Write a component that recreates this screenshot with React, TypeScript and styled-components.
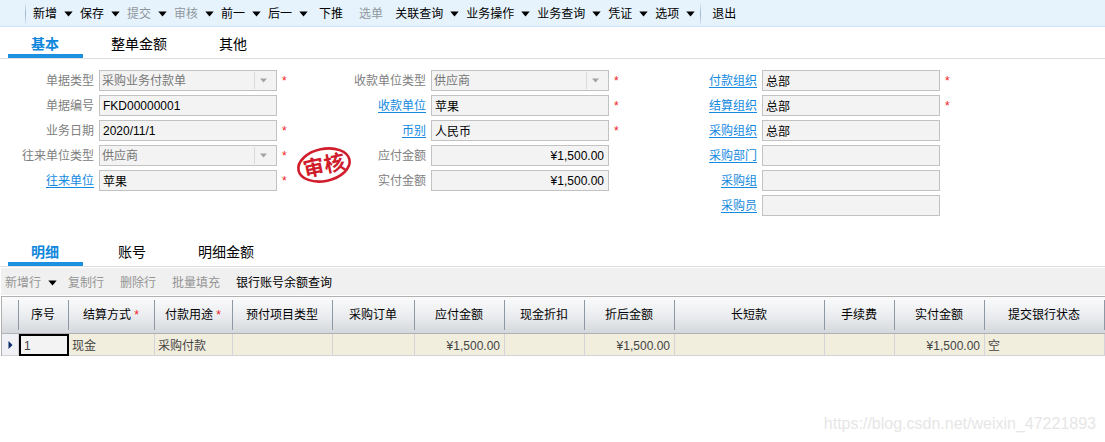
import React from 'react';
import styled, { createGlobalStyle, css } from 'styled-components';

const Global = createGlobalStyle`
  *, *::before, *::after { box-sizing: border-box; }
  body {
    margin: 0;
    background: #fff;
    color: #000;
    font: 12px/16px "Liberation Sans", "Noto Sans CJK SC", sans-serif;
  }
  button, input, select { font: inherit; margin: 0; }
`;

const Page = styled.main`
  position: relative;
  display: flex;
  flex-direction: column;
  min-height: 100vh;
`;

const MainBar = styled.div`
  display: flex;
  align-items: center;
  height: 27px;
  padding-top: 1px;
  padding-left: 25px;
  background: #e7f3fc;
  border-bottom: 1px solid #cce2fc;
`;

const SubBar = styled.div`
  display: flex;
  align-items: center;
  height: 27px;
  margin: 1px 0 1px 1px;
  padding: 1px 4px 0;
  background: #f0f0f0;
`;

const Divider = styled.span<{ $trailing?: boolean }>`
  width: 1px;
  height: 20px;
  margin: ${p => (p.$trailing ? '0 7px 0 -2px' : '0 7px 0 0')};
  background: linear-gradient(#d8e6f3, #9fb6cf, #d8e6f3);
`;

const ToolButton = styled.button<{ $menu?: boolean }>`
  display: flex;
  align-items: center;
  gap: 7px;
  padding: ${p => (p.$menu ? '1px 7px 0 0' : '1px 12px 0 4px')};
  border: 0;
  background: none;
  color: #000;
  line-height: 18px;
  white-space: nowrap;
  &:disabled { color: #8f979e; }
`;

const SubButton = styled(ToolButton)`
  &:disabled { color: #959595; }
`;

const Caret = () => (
  <svg width="9" height="6" viewBox="0 0 9 6" aria-hidden="true">
    <path d="M0.3 0.5H8.7L4.5 5.5Z" fill="#000" />
  </svg>
);

const TabStrip = styled.div<{ $spaced?: boolean }>`
  display: flex;
  align-items: stretch;
  gap: 5px;
  height: 32px;
  padding-left: 8px;
  border-bottom: 1px solid #dedede;
  ${p => p.$spaced && css`
    margin-top: 19px;
    & > :first-child { margin-right: 7px; }
  `}
`;

const Tab = styled.button<{ $active?: boolean }>`
  padding: 7px 24px 0 23px;
  border: 0;
  border-bottom: 4px solid ${p => (p.$active ? '#1e90e2' : 'transparent')};
  background: none;
  color: ${p => (p.$active ? '#0f87dc' : '#000')};
  font-size: 14px;
  line-height: 20px;
  font-weight: ${p => (p.$active ? 700 : 400)};
  white-space: nowrap;
`;

const Form = styled.form`
  position: relative;
  display: grid;
  grid-template-columns: 332px 331px 1fr;
  padding-top: 11px;
`;

const FormColumn = styled.div`
  display: flex;
  flex-direction: column;
  gap: 4px;
`;

const FieldRow = styled.div`
  display: flex;
  align-items: center;
  gap: 5px;
  height: 21px;
`;

const labelBox = css`
  width: 94px;
  text-align: right;
  white-space: nowrap;
`;

const Label = styled.label`
  ${labelBox}
  color: #808080;
`;

const LabelLink = styled.span`
  ${labelBox}
  a { color: #1389e0; text-underline-offset: 2px; }
`;

const box = css`
  width: 178px;
  height: 21px;
  border: 1px solid #c2c2c2;
  border-radius: 0;
  background: #f3f3f3;
  outline: 0;
`;

const TextBox = styled.input<{ $amount?: boolean }>`
  ${box}
  padding: 0 4px 0 3px;
  color: #000;
  text-align: ${p => (p.$amount ? 'right' : 'left')};
`;

const SelectWrap = styled.span`
  ${box}
  display: flex;
  align-items: center;
  & > svg { flex: none; margin-right: 3px; }
`;

const Select = styled.select`
  appearance: none;
  flex: 1;
  height: 19px;
  padding: 0 2px;
  border: 0;
  background: none;
  color: #777;
  opacity: 1;
`;

const Star = styled.span`
  color: #f02020;
  line-height: 12px;
`;

const Stamp = styled.svg`
  position: absolute;
  left: 294px;
  top: 84px;
  overflow: visible;
`;

const Grid = styled.table`
  width: 100%;
  table-layout: fixed;
  border-collapse: separate;
  border-spacing: 0;
  border-top: 1px solid #b0b0b0;
  border-left: 1px solid #b0b0b0;
`;

const GridWrap = styled.div`
  padding-left: 1px;
`;

const HeadRow = styled.tr`
  background: linear-gradient(#fbfbfc, #e9ebee 55%, #d2d6da);
`;

const HeadCell = styled.th`
  height: 37px;
  padding: 0 2px 0 0;
  border-bottom: 1px solid #b0b2b8;
  background: linear-gradient(#8e98a5, #8e98a5) right 3px / 1px 30px no-repeat;
  font-weight: 400;
  white-space: nowrap;
`;

const Cell = styled.td<{ $amount?: boolean }>`
  height: 22px;
  padding: 2px 4px 0 3px;
  border-right: 1px solid #d3d3d9;
  border-bottom: 1px solid #d3d3d3;
  background: #f2eede;
  color: #444;
  text-align: ${p => (p.$amount ? 'right' : 'left')};
  white-space: nowrap;
`;

const MarkerCell = styled(Cell)`
  padding: 0 0 0 6px;
  background: #eff1f7;
  svg { display: block; }
`;

const FocusCell = styled(Cell)`
  padding: 2px 3px 0;
  border: 2px solid #000;
  background: #f3f3f3;
`;

const Watermark = styled.div`
  position: absolute;
  right: 9px;
  bottom: 8px;
  color: #e6e6e6;
  font-size: 16px;
  line-height: 20px;
`;

type Action = { text: string; menu?: boolean; off?: boolean };

const mainActions: Action[] = [
  { text: '新增', menu: true },
  { text: '保存', menu: true },
  { text: '提交', menu: true, off: true },
  { text: '审核', menu: true, off: true },
  { text: '前一', menu: true },
  { text: '后一', menu: true },
  { text: '下推' },
  { text: '选单', off: true },
  { text: '关联查询', menu: true },
  { text: '业务操作', menu: true },
  { text: '业务查询', menu: true },
  { text: '凭证', menu: true },
  { text: '选项', menu: true },
];

const rowActions: Action[] = [
  { text: '新增行', menu: true, off: true },
  { text: '复制行', off: true },
  { text: '删除行', off: true },
  { text: '批量填充', off: true },
  { text: '银行账号余额查询' },
];

type FieldDef = {
  label: string;
  value?: string;
  kind?: 'select' | 'amount';
  link?: boolean;
  required?: boolean;
};

const columns: FieldDef[][] = [
  [
    { label: '单据类型', value: '采购业务付款单', kind: 'select', required: true },
    { label: '单据编号', value: 'FKD00000001' },
    { label: '业务日期', value: '2020/11/1', required: true },
    { label: '往来单位类型', value: '供应商', kind: 'select', required: true },
    { label: '往来单位', value: '苹果', link: true, required: true },
  ],
  [
    { label: '收款单位类型', value: '供应商', kind: 'select', required: true },
    { label: '收款单位', value: '苹果', link: true, required: true },
    { label: '币别', value: '人民币', link: true, required: true },
    { label: '应付金额', value: '¥1,500.00', kind: 'amount' },
    { label: '实付金额', value: '¥1,500.00', kind: 'amount' },
  ],
  [
    { label: '付款组织', value: '总部', link: true, required: true },
    { label: '结算组织', value: '总部', link: true, required: true },
    { label: '采购组织', value: '总部', link: true },
    { label: '采购部门', link: true },
    { label: '采购组', link: true },
    { label: '采购员', link: true },
  ],
];

const gridColumns: { title: string; width?: number; required?: boolean; value?: string; amount?: boolean }[] = [
  { title: '结算方式', width: 86, required: true, value: '现金' },
  { title: '付款用途', width: 78, required: true, value: '采购付款' },
  { title: '预付项目类型', width: 100 },
  { title: '采购订单', width: 82 },
  { title: '应付金额', width: 90, value: '¥1,500.00', amount: true },
  { title: '现金折扣', width: 80 },
  { title: '折后金额', width: 90, value: '¥1,500.00', amount: true },
  { title: '长短款' },
  { title: '手续费', width: 70 },
  { title: '实付金额', width: 90, value: '¥1,500.00', amount: true },
  { title: '提交银行状态', width: 120, value: '空' },
];

function Field({ def, id }: { def: FieldDef; id: string }) {
  return (
    <FieldRow>
      {def.link ? (
        <LabelLink><a id={`${id}-label`} href="#">{def.label}</a></LabelLink>
      ) : (
        <Label id={`${id}-label`} htmlFor={id}>{def.label}</Label>
      )}
      {def.kind === 'select' ? (
        <SelectWrap>
          <Select id={id} disabled defaultValue={def.value}>
            <option>{def.value}</option>
          </Select>
          <svg width="19" height="17" viewBox="0 0 19 17" aria-hidden="true">
            <rect x="0" y="0" width="1" height="17" fill="#d9d9d9" />
            <path d="M6 6.5H13L9.5 10.5Z" fill="#a3a3a3" />
          </svg>
        </SelectWrap>
      ) : (
        <TextBox
          id={id}
          aria-labelledby={`${id}-label`}
          readOnly
          defaultValue={def.value ?? ''}
          $amount={def.kind === 'amount'}
        />
      )}
      {def.required && <Star>*</Star>}
    </FieldRow>
  );
}

export default function App() {
  return (
    <Page>
      <Global />
      <MainBar role="toolbar">
        <Divider />
        {mainActions.map(a => (
          <ToolButton key={a.text} $menu={a.menu} disabled={a.off}>
            {a.text}{a.menu && <Caret />}
          </ToolButton>
        ))}
        <Divider $trailing />
        <ToolButton>退出</ToolButton>
      </MainBar>

      <TabStrip role="tablist">
        <Tab role="tab" aria-selected $active>基本</Tab>
        <Tab role="tab">整单金额</Tab>
        <Tab role="tab">其他</Tab>
      </TabStrip>

      <Form>
        {columns.map((fields, c) => (
          <FormColumn key={c}>
            {fields.map((f, r) => <Field key={f.label} def={f} id={`field-${c}-${r}`} />)}
          </FormColumn>
        ))}
        <Stamp width="60" height="44" viewBox="0 0 60 44" role="img" aria-label="审核">
          <g transform="rotate(-12 30 22)">
            <ellipse cx="30" cy="22" rx="26" ry="16" fill="#fff" stroke="#d01c2b" strokeWidth="2.6" />
            <text
              x="30"
              y="30"
              textAnchor="middle"
              fill="#d01c2b"
              fontFamily="'Noto Sans CJK SC', sans-serif"
              fontSize="21"
              fontWeight="700"
            >
              审核
            </text>
          </g>
        </Stamp>
      </Form>

      <TabStrip role="tablist" $spaced>
        <Tab role="tab" aria-selected $active>明细</Tab>
        <Tab role="tab">账号</Tab>
        <Tab role="tab">明细金额</Tab>
      </TabStrip>

      <SubBar role="toolbar">
        {rowActions.map(a => (
          <SubButton key={a.text} $menu={a.menu} disabled={a.off}>
            {a.text}{a.menu && <Caret />}
          </SubButton>
        ))}
      </SubBar>

      <GridWrap>
        <Grid>
          <colgroup>
            <col width={17} />
            <col width={50} />
            {gridColumns.map(c => <col key={c.title} width={c.width} />)}
          </colgroup>
          <thead>
            <HeadRow>
              <HeadCell />
              <HeadCell>序号</HeadCell>
              {gridColumns.map(c => (
                <HeadCell key={c.title}>
                  {c.title}{c.required && <Star> *</Star>}
                </HeadCell>
              ))}
            </HeadRow>
          </thead>
          <tbody>
            <tr>
              <MarkerCell>
                <svg width="5" height="8" viewBox="0 0 5 8" aria-hidden="true">
                  <path d="M0.5 0L4.5 4L0.5 8Z" fill="#0b2a6b" />
                </svg>
              </MarkerCell>
              <FocusCell>1</FocusCell>
              {gridColumns.map(c => (
                <Cell key={c.title} $amount={c.amount}>{c.value}</Cell>
              ))}
            </tr>
          </tbody>
        </Grid>
      </GridWrap>

      <Watermark>https://blog.csdn.net/weixin_47221893</Watermark>
    </Page>
  );
}
